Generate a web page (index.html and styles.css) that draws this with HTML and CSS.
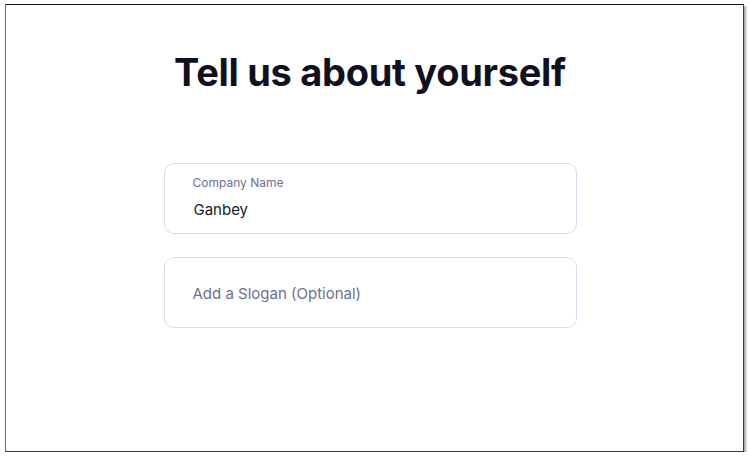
FILE: index.html
```html
<!DOCTYPE html>
<html>
<head>
<meta charset="utf-8">
<link rel="stylesheet" href="styles.css">
</head>
<body>
<div class="frame">
  <h1 class="title">Tell us about yourself</h1>
  <form class="form">
    <div class="field">
      <span class="label">Company Name</span>
      <span class="value">Ganbey</span>
    </div>
    <div class="field field-empty">
      <span class="placeholder">Add a Slogan (Optional)</span>
    </div>
  </form>
</div>
</body>
</html>
```
FILE: styles.css
```css
html, body {
  margin: 0;
  padding: 0;
  background: #ffffff;
}
body {
  padding: 4px 5px 0 5px;
  font-family: Inter, "Noto Sans", sans-serif;
}
.frame {
  box-sizing: border-box;
  width: 739px;
  height: 448px;
  padding-right: 9px;
  border: 1px solid #3a3a3a;
  border-top-color: #111;
  border-left-color: #6a6a6a;
  box-shadow: 2px 2px 2px rgba(0,0,0,0.35);
  display: flex;
  flex-direction: column;
  align-items: center;
  background: #fff;
}
.title {
  margin: 42px 0 0 0;
  font-size: 38px;
  line-height: 50px;
  font-weight: 700;
  color: #0f1020;
  letter-spacing: -0.3px;
}
.form {
  margin-top: 66px;
  display: flex;
  flex-direction: column;
  gap: 23px;
}
.field {
  box-sizing: border-box;
  width: 413px;
  height: 71px;
  border: 1px solid #d6deee;
  border-radius: 10px;
  padding: 12px 28px 0 28px;
  display: flex;
  flex-direction: column;
}
.label {
  font-size: 12px;
  line-height: 14px;
  color: #6e7190;
}
.value {
  margin-top: 10px;
  padding-left: 1px;
  font-size: 15px;
  line-height: 20px;
  color: #16172a;
}
.field-empty {
  padding-top: 3px;
  justify-content: center;
}
.placeholder {
  font-size: 15px;
  line-height: 20px;
  color: #6e7190;
}
```
